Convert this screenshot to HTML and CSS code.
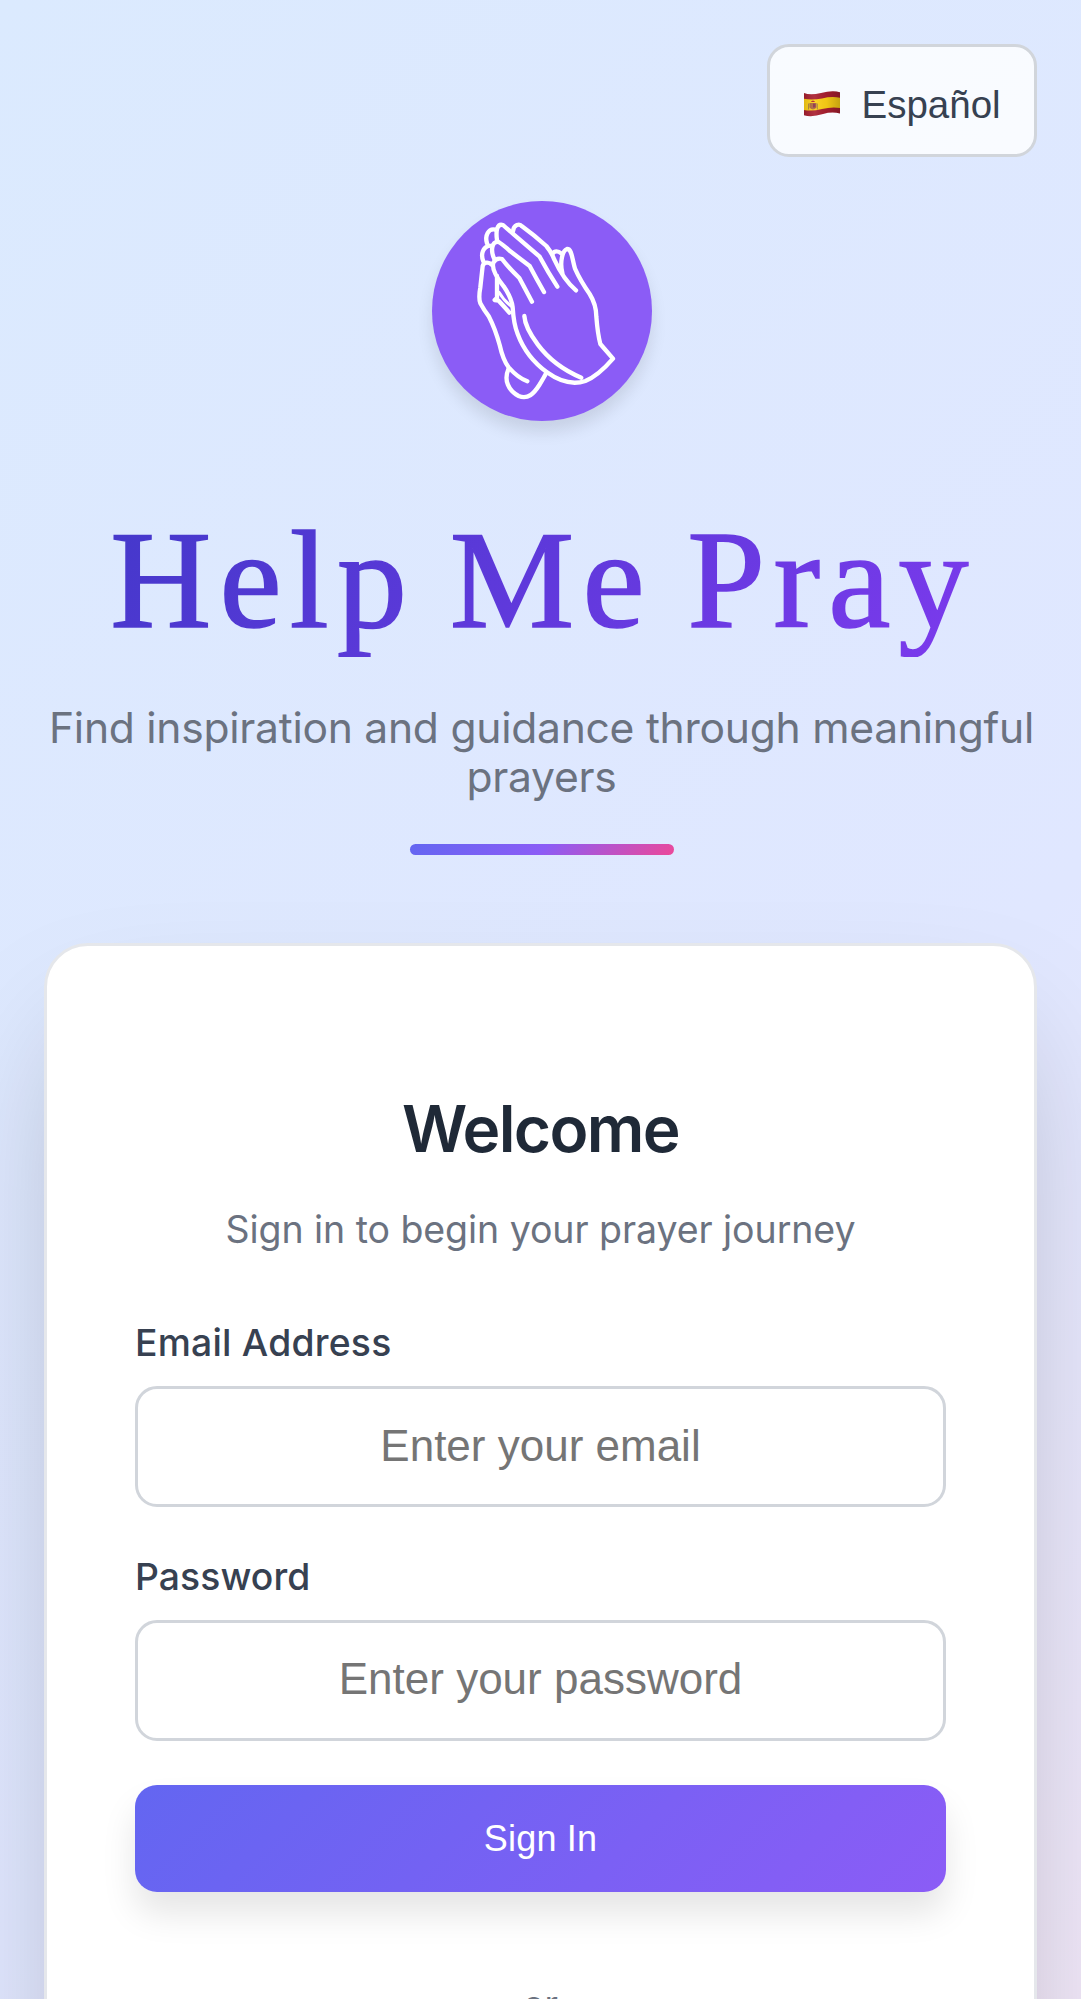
FILE: index.html
```
<!DOCTYPE html>
<html lang="en">
<head>
  <meta charset="utf-8">
  <title>Help Me Pray</title>
  <link rel="stylesheet" href="styles.css">
</head>
<body>
  <div class="page">
    <header class="topbar">
      <button class="lang" type="button">
        <svg class="flag" viewBox="0 0 36 26" aria-hidden="true">
          <defs>
            <clipPath id="wave"><path d="M0 2 Q6 4.500 17 2 Q28 -0.800 36 1.200 V22.500 Q28 20.500 19 23 Q8 26.500 0 24.300 Z"/></clipPath>
            <linearGradient id="shade"><stop offset="0" stop-color="#000" stop-opacity=".12"/><stop offset=".3" stop-color="#fff" stop-opacity=".08"/><stop offset=".62" stop-color="#000" stop-opacity=".05"/><stop offset="1" stop-color="#000" stop-opacity=".22"/></linearGradient>
          </defs>
          <g clip-path="url(#wave)">
            <rect width="36" height="26" fill="#a91f30"/>
            <path d="M0 7.800 Q8 9.500 18 7.500 Q28 5 36 6.800 V17 Q28 15.500 18 18 Q8 20.500 0 19 Z" fill="#fdd016"/>
            <path d="M5.500 12 h7 v4.500 q-3.500 4 -7 0 Z" fill="#b06a3c"/>
            <path d="M6.800 11 q2.200 -3 4.400 0 Z" fill="#b3262e"/>
            <path d="M9 12.500 h2.500 v4 H9 Z" fill="#8c3147"/>
            <path d="M4.600 12.500 v6 M13.300 12.500 v6" stroke="#a8803c" stroke-width="1"/>
            <rect width="36" height="26" fill="url(#shade)"/>
          </g>
        </svg>
        <span>Español</span>
      </button>
    </header>

    <section class="hero">
      <div class="logo">
        <svg viewBox="35 31 660 660" fill="none" stroke="#fff" stroke-width="13" stroke-linecap="round" stroke-linejoin="round" aria-hidden="true">
          <path d="M214 222 C205 213 191 214 187 226 L180 290 Q174 322 180 338 Q190 357 206 378 Q225 415 238 463 Q248 508 265 530 Q292 561 321 572"/>
          <path d="M264 536 C250 568 264 600 295 616 C323 628 341 608 357 583 Q373 557 378 546"/>
          <path d="M189 212 C180 190 188 169 208 165"/>
          <path d="M200 158 C193 135 204 112 225 117"/>
          <path d="M222 205 C210 180 214 151 235 154 Q248 162 270 182 L328 226 Q347 262 371 304"/>
          <path d="M230 148 C226 120 230 98 248 103 Q262 116 280 131 L358 198 Q384 246 411 288"/>
          <path d="M278 122 C280 101 298 98 305 107 Q342 134 378 166 Q393 184 402 207 Q430 268 467 299"/>
          <path d="M398 188 C402 180 414 180 422 188"/>
          <path d="M426 246 C418 215 426 180 440 175 C455 174 455 205 464 234 Q480 270 508 310 Q528 342 528 378 Q532 430 540 460 L578 504 Q533 556 495 571 Q441 589 380 545 Q318 500 292 430 Q280 400 277 350 Q274 322 250 287 Q212 240 219 216 Q228 200 245 205 Q262 228 297 262 Q312 290 335 333"/>
          <path d="M230 256 V321 L223 328 L235 330 Q252 348 267 366"/>
          <path d="M236 305 Q253 334 275 348" stroke-width="9"/>
          <path d="M312 376 Q314 410 352 461 Q400 526 483 561"/>
        </svg>
      </div>
      <h1 class="title">Help Me Pray</h1>
      <p class="tagline">Find inspiration and guidance through meaningful <span class="last">prayers</span></p>
      <div class="accent"></div>
    </section>

    <main class="card">
      <h2 class="welcome">Welcome</h2>
      <p class="intro">Sign in to begin your prayer journey</p>
      <form class="form">
        <label class="label" for="email">Email Address</label>
        <input class="input" id="email" type="email" placeholder="Enter your email">
        <label class="label label-password" for="password">Password</label>
        <input class="input" id="password" type="password" placeholder="Enter your password">
        <button class="submit" type="button">Sign In</button>
      </form>
      <p class="or">or</p>
    </main>
  </div>
</body>
</html>
```

FILE: styles.css
```
* {
  box-sizing: border-box;
}

body {
  margin: 0;
  font-family: Inter, "Liberation Sans", sans-serif;
  color: #1f2937;
}

h1, h2, p {
  margin: 0;
  font-weight: 400;
}

.page {
  height: 1999px;
  overflow: hidden;
  padding: 44px 44px 0;
  background: linear-gradient(135deg, #dbeafe 0%, #e0e7ff 50%, #fce7f3 100%) 0 0 / 1081px 2820px no-repeat;
}

.topbar {
  display: flex;
  justify-content: flex-end;
}

.lang {
  display: flex;
  align-items: center;
  gap: 22px;
  width: 270px;
  height: 113px;
  padding: 9px 0 0 33.5px;
  border: 3px solid #d1d5db;
  border-radius: 22px;
  background: rgba(255, 255, 255, 0.8);
  color: #374151;
  font: 38.5px/46px "Liberation Sans", Arial, sans-serif;
}

.flag {
  width: 36px;
  height: 26px;
  margin-top: -2px;
}

.hero {
  display: flex;
  flex-direction: column;
  align-items: center;
  margin: 43.5px -11px 0 -9px;
  text-align: center;
}

.logo {
  width: 220px;
  height: 220px;
  border-radius: 50%;
  background: #8b5cf6;
  box-shadow: 0 11px 16px rgba(0, 0, 0, 0.1);
}

.logo svg {
  display: block;
}

.title {
  margin-top: 82px;
  padding-left: 4px;
  font: 400 140px/154px "Liberation Serif", "Times New Roman", serif;
  letter-spacing: 8.2px;
  word-spacing: -8.6px;
  white-space: nowrap;
  background: linear-gradient(135deg, #4338ca, #7c3aed);
  -webkit-background-clip: text;
  background-clip: text;
  color: transparent;
  -webkit-text-stroke: 1.6px transparent;
}

.tagline {
  margin-top: 46.5px;
  font-size: 42.6px;
  line-height: 49px;
  letter-spacing: -0.27px;
  color: #6b7280;
}

.accent {
  width: 264px;
  height: 11px;
  margin-top: 43px;
  border-radius: 5.5px;
  background: linear-gradient(135deg, #6366f1, #8b5cf6, #ec4899);
}

.card {
  height: 1400px;
  margin-top: 88px;
  padding: 144px 88px 0;
  border: 3px solid #e5e7eb;
  border-radius: 44px;
  background: #fff;
  box-shadow: 0 69px 137px -33px rgba(0, 0, 0, 0.25);
  text-align: center;
}

.welcome {
  font-size: 64px;
  font-weight: 600;
  line-height: 77px;
  letter-spacing: -1.65px;
}

.intro {
  margin-top: 39.6px;
  font-size: 37.5px;
  line-height: 46px;
  letter-spacing: -0.06px;
  color: #6b7280;
}

.form {
  display: flex;
  flex-direction: column;
  margin-top: 67.2px;
}

.label {
  font-size: 37.3px;
  font-weight: 500;
  line-height: 46px;
  letter-spacing: 0.22px;
  color: #374151;
  text-align: left;
}

.label-password {
  margin-top: 47.2px;
  letter-spacing: 0.08px;
}

.input {
  width: 100%;
  height: 121px;
  margin-top: 20.4px;
  padding: 0 40px 2px;
  border: 3px solid #d1d5db;
  border-radius: 22px;
  background: #fff;
  font: 44px "Liberation Sans", Arial, sans-serif;
  text-align: center;
}

.label-password + .input {
  margin-top: 19.6px;
}

.input::placeholder {
  color: #757575;
}

.submit {
  height: 107px;
  margin-top: 44px;
  padding: 1px 0 0;
  border: 0;
  border-radius: 22px;
  background: linear-gradient(135deg, #6366f1, #8b5cf6);
  box-shadow: 0 22px 34px rgba(0, 0, 0, 0.1);
  color: #fff;
  font: 36px "Liberation Sans", Arial, sans-serif;
  letter-spacing: 0.2px;
}

.or {
  margin-top: 89.2px;
  font-size: 35.75px;
  line-height: 46px;
  color: #6b7280;
}
```
